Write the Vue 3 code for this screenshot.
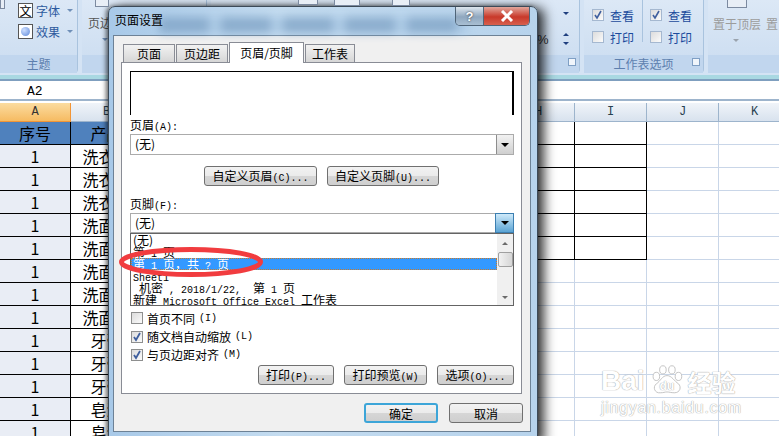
<template>
  <div class="screen">
    <!-- ribbon behind the dialog -->
    <div class="ribbon">
      <span v-for="(t, i) in topIcons" :key="i" class="top-ic" :style="{ left: t.x + 'px', width: t.w + 'px', height: t.h + 'px' }"></span>
      <div class="group g-theme">
        <div class="group-body">
          <div class="theme-item"><span class="ic-box">文</span><span>字体</span><i class="caret"></i></div>
          <div class="theme-item"><span class="ic-box"><b class="ball"></b></span><span>效果</span><i class="caret"></i></div>
        </div>
        <div class="group-label">主题</div>
      </div>
      <div class="group g-page">
        <div class="group-body"><span class="page-btn">页边</span><i class="caret page-caret"></i></div>
        <div class="group-label"></div>
      </div>
      <div class="group g-scale">
        <div class="group-body">
          <div class="scale-row"><i class="caret blue"></i></div>
          <div class="scale-row pct"><span class="pct-sign">%</span><span class="spin"><i class="up"></i><i class="caret blue"></i></span></div>
        </div>
        <div class="group-label"><i class="launcher"></i></div>
      </div>
      <div class="group g-sheet">
        <div class="group-body sheet-opts">
          <div class="opt-col" v-for="c in 2" :key="c">
            <div class="opt"><span class="cb rb"><svg viewBox="0 0 10 10"><path d="M2 5l2 3 4-7" fill="none" stroke="#3f5f9e" stroke-width="1.6"/></svg></span>查看</div>
            <div class="opt"><span class="cb rb"></span>打印</div>
          </div>
        </div>
        <div class="group-label">工作表选项<i class="launcher"></i></div>
      </div>
      <div class="group g-arrange">
        <div class="group-body"><span class="front">置于顶层</span><span class="front">置</span><i class="caret gray"></i></div>
        <div class="group-label"></div>
      </div>
    </div>

    <div class="formula"><span class="namebox">A2</span></div>

    <!-- sheet -->
    <div class="sheet">
      <div class="row head">
        <div v-for="(h, i) in colHeads" :key="i" class="hcell" :class="{ on: i === 0 }">{{ h }}</div>
      </div>
      <div class="row title">
        <div class="cell a blue">序号</div>
        <div class="cell b blue">产品</div>
        <div class="cell gap"></div>
        <div class="cell ruled"></div><div class="cell ruled"></div><div class="cell"></div><div class="cell"></div>
      </div>
      <div class="row" v-for="(r, i) in rows" :key="i">
        <div class="cell a">1</div>
        <div class="cell b">{{ r }}</div>
        <div class="cell gap"></div>
        <div class="cell" :class="{ ruled: i < 5 }"></div>
        <div class="cell" :class="{ ruled: i < 5 }"></div>
        <div class="cell"></div>
        <div class="cell"></div>
      </div>
    </div>

    <!-- watermark -->
    <div class="mark">
      <div class="mark-top">
        <span class="bai">Bai</span>
        <span class="paw-wrap">
          <svg class="paw" viewBox="0 0 44 36">
            <ellipse cx="9" cy="13" rx="4" ry="5"/><ellipse cx="17" cy="5" rx="4" ry="5"/>
            <ellipse cx="28" cy="5" rx="4" ry="5"/><ellipse cx="36" cy="13" rx="4" ry="5"/>
            <path d="M22 12c-6 0-8 7-13 10-5 4-2 12 5 11 4 0 5-1 8-1s5 1 9 1c7 0 9-7 5-11-5-3-8-10-14-10z"/>
          </svg>
          <span class="du">du</span>
        </span>
        <span class="cn">经验</span>
      </div>
      <div class="mark-url">jingyan.baidu.com</div>
    </div>

    <!-- page setup dialog -->
    <div class="dialog">
      <div class="blur-strip"></div>
      <div class="caption">页面设置</div>
      <div class="caption-btns">
        <span class="cap help">?</span>
        <span class="cap close">
          <svg viewBox="0 0 14 12" width="14" height="12"><path d="M2 1l10 10M12 1L2 11" stroke="#fff" stroke-width="3"/></svg>
        </span>
      </div>

      <div class="client">
        <div class="tabs">
          <div class="tab">页面</div>
          <div class="tab">页边距</div>
          <div class="tab active">页眉/页脚</div>
          <div class="tab">工作表</div>
        </div>

        <div class="panel">
          <div class="preview"></div>
          <div class="lbl">页眉<span class="lat">(A):</span></div>
          <div class="combo">
            <span class="combo-text">(无)</span>
            <span class="drop"><i class="caret dark"></i></span>
          </div>

          <div class="custom-row">
            <button class="btn w-custom-l">自定义页眉<span class="lat">(C)...</span></button>
            <button class="btn w-custom-r">自定义页脚<span class="lat">(U)...</span></button>
          </div>

          <div class="lbl second">页脚<span class="lat">(F):</span></div>
          <div class="combo foot">
            <span class="combo-text">(无)</span>
            <span class="drop hot"><i class="caret dark"></i></span>
          </div>

          <div class="list">
            <div class="items">
              <div class="item">(无)</div>
              <div class="item">第<span class="lat">&nbsp;1&nbsp;</span>页</div>
              <div class="item sel">第<span class="lat">&nbsp;1&nbsp;</span>页，共<span class="lat">&nbsp;?&nbsp;</span>页</div>
              <div class="item"><span class="lat">Sheet1</span></div>
              <div class="item"><span class="lat">&nbsp;</span>机密<span class="lat">&nbsp;,&nbsp;2018/1/22,&nbsp;&nbsp;</span>第<span class="lat">&nbsp;1&nbsp;</span>页</div>
              <div class="item">新建<span class="lat">&nbsp;Microsoft Office Excel&nbsp;</span>工作表</div>
            </div>
            <div class="scroll">
              <i class="up gray"></i>
              <b class="thumb"></b>
              <i class="caret gray low"></i>
            </div>
          </div>

          <div class="checks">
            <div class="check"><span class="cb"></span>首页不同<span class="lat">(I)</span></div>
            <div class="check"><span class="cb"><svg viewBox="0 0 10 10"><path d="M2 5l2 3 4-7" fill="none" stroke="#3f5f9e" stroke-width="1.8"/></svg></span>随文档自动缩放<span class="lat">(L)</span></div>
            <div class="check"><span class="cb"><svg viewBox="0 0 10 10"><path d="M2 5l2 3 4-7" fill="none" stroke="#3f5f9e" stroke-width="1.8"/></svg></span>与页边距对齐<span class="lat">(M)</span></div>
          </div>

          <div class="print-row">
            <button class="btn w-print">打印<span class="lat">(P)...</span></button>
            <button class="btn w-preview">打印预览<span class="lat">(W)</span></button>
            <button class="btn w-opts">选项<span class="lat">(O)...</span></button>
          </div>
        </div>

        <div class="footer">
          <button class="btn ok">确定</button>
          <button class="btn cancel">取消</button>
        </div>
      </div>

      <svg class="ring" width="150" height="34" viewBox="0 0 150 34">
        <ellipse cx="74" cy="17" rx="69.5" ry="12.5" fill="none" stroke="#f13c3f" stroke-width="5"/>
      </svg>
    </div>
  </div>
</template>

<script setup>
const colHeads = ['A', 'B', '', 'H', 'I', 'J', 'K']

const rows = [
  '洗衣机', '洗衣机', '洗衣机',
  '洗面奶', '洗面奶', '洗面奶', '洗面奶', '洗面奶',
  '牙膏', '牙膏', '牙膏',
  '皂液', '皂液'
]

// clipped icon bottoms along the top edge of the ribbon
const topIcons = [
  { x: 0, w: 5, h: 9 },
  { x: 95, w: 14, h: 7 },
  { x: 298, w: 20, h: 5 },
  { x: 334, w: 26, h: 6 },
  { x: 392, w: 18, h: 6 },
  { x: 727, w: 20, h: 8 }
]
</script>

<style>
html, body {
  margin: 0;
  overflow: hidden;
  background: #fff;
}
</style>

<style scoped>
.screen {
  position: relative;
  width: 779px;
  height: 436px;
  overflow: hidden;
  font-family: "Noto Sans CJK SC", "Liberation Sans", sans-serif;
  font-size: 12px;
  color: #000;
}

.lat {
  font-family: "Liberation Mono", "Noto Sans CJK SC", monospace;
  font-size: 10px;
  white-space: pre;
}

/* ribbon */
.ribbon {
  position: relative;
  display: flex;
  height: 81px;
  box-sizing: border-box;
  padding-bottom: 6px;
  background: #d4e3f4;
  border-bottom: 2px solid #7f9fbf;
  box-shadow: inset 0 -4px 0 #a9d8e2;
}
.top-ic {
  position: absolute;
  top: 0;
  box-sizing: border-box;
  background: #e8eef6;
  border: 1px solid #7c8aa0;
  border-top: 0;
  z-index: 1;
}
.group {
  display: flex;
  flex-direction: column;
  flex: none;
  box-sizing: border-box;
  height: 73px;
  border-right: 1px solid #a9c3de;
  border-radius: 0 0 4px 4px;
  margin-right: 4px;
  background: linear-gradient(#dce8f6, #cadcf0);
}
.group-body {
  height: 55px;
  position: relative;
}
.group-label {
  height: 18px;
  background: #c1d6ee;
  color: #5d7fae;
  text-align: center;
  line-height: 18px;
  font-size: 12px;
  position: relative;
}
.g-theme { width: 78px; }
.g-page { width: 125px; }
.g-scale { width: 369px; }
.g-sheet { width: 120px; }
.g-arrange { flex: 1; border-right: 0; margin-right: 0; }

.theme-item {
  display: flex;
  align-items: center;
  gap: 3px;
  height: 21px;
  padding-left: 18px;
  color: #2d5a9e;
}
.ic-box {
  width: 15px;
  height: 15px;
  box-sizing: border-box;
  background: #fff;
  border: 1px solid #555;
  color: #000;
  font-size: 12px;
  display: flex;
  align-items: center;
  justify-content: center;
}
.ball {
  width: 9px;
  height: 9px;
  border-radius: 50%;
  background: radial-gradient(circle at 35% 35%, #cfe0ff, #5c86d8);
}
.caret {
  display: inline-block;
  width: 0;
  height: 0;
  margin-left: 4px;
  border-left: 3px solid transparent;
  border-right: 3px solid transparent;
  border-top: 3px solid #6f8fb8;
}
.caret.blue { border-top-color: #1f3f7f; margin: 0; }
.caret.gray { border-top-color: #9aa3ad; }
.caret.dark { border-left-width: 4px; border-right-width: 4px; border-top: 4px solid #000; margin: 0; }
.up {
  display: block;
  width: 0;
  height: 0;
  border-left: 3px solid transparent;
  border-right: 3px solid transparent;
  border-bottom: 3px solid #1f3f7f;
}

.page-btn {
  position: absolute;
  left: 6px;
  top: 14px;
  color: #555;
}
.page-caret {
  position: absolute;
  left: 20px;
  top: 38px;
  margin: 0;
}

.scale-row {
  display: flex;
  justify-content: flex-end;
  align-items: center;
  height: 26px;
  padding-right: 10px;
}
.pct-sign {
  margin-right: auto;
  margin-left: 326px;
  font-family: "Liberation Sans", sans-serif;
  font-size: 13px;
  color: #333;
}
.spin {
  display: flex;
  flex-direction: column;
  align-items: center;
  gap: 6px;
}
.launcher {
  position: absolute;
  right: 3px;
  top: 3px;
  width: 6px;
  height: 6px;
  background: #f0f5fb;
  border: 1px solid #7f9fc4;
}

.sheet-opts {
  display: flex;
  padding-left: 8px;
  gap: 8px;
}
.opt-col + .opt-col {
  border-left: 1px solid #a9c3de;
  padding-left: 7px;
  height: 42px;
}
.opt {
  display: flex;
  align-items: center;
  gap: 6px;
  height: 22px;
  color: #1b4a9c;
}
.opt:first-child { margin-top: 4px; }

.cb {
  display: inline-flex;
  flex: none;
  box-sizing: border-box;
  width: 12px;
  height: 12px;
  background: linear-gradient(135deg, #dcdcdc, #fbfbfb);
  border: 1px solid #8e8f8f;
}
.cb svg { width: 10px; height: 10px; }
.cb.rb { border-color: #a5b8d0; }

.front {
  color: #9c9c9c;
  position: relative;
  top: 15px;
  margin-left: 5px;
  display: inline-block;
}
.g-arrange .caret {
  position: absolute;
  left: 25px;
  top: 39px;
  margin: 0;
}

/* formula bar */
.formula {
  height: 18px;
  background: #fff;
  border-bottom: 2px solid #9db4cc;
  line-height: 18px;
}
.namebox {
  margin-left: 27px;
  font-family: "Liberation Mono", monospace;
  font-size: 13px;
}

/* grid */
.sheet {
  margin-top: 2px;
}
.row {
  display: grid;
  grid-template-columns: 71px 72px 360px 72px 72px 72px 72px;
  grid-template-rows: 100%;
  height: 23px;
}
.row.head {
  height: 19px;
}
.hcell {
  box-sizing: border-box;
  background: linear-gradient(#f0f4f9, #d8e2ee);
  border-right: 1px solid #9db4cc;
  border-bottom: 1px solid #9db4cc;
  text-align: center;
  line-height: 18px;
  font-family: "Liberation Mono", monospace;
  font-size: 12px;
  color: #27414f;
}
.hcell.on {
  background: linear-gradient(#fbdca0, #f6bb62);
  border-right-color: #f29536;
  border-bottom-color: #f29536;
  color: #333;
}
.cell {
  box-sizing: border-box;
  border-right: 1px solid #c9d6e8;
  border-bottom: 1px solid #c9d6e8;
  background: #fff;
}
.cell.a, .cell.b {
  text-align: center;
  font-size: 16px;
  line-height: 22px;
  border-right: 1px solid #000;
  border-bottom: 1px solid #000;
}
.cell.a { background: #e9edf5; }
.cell.blue { background: #4f81bd; }
.cell.ruled {
  border-right: 1px solid #000;
  border-bottom: 1px solid #000;
}

/* watermark */
.mark {
  position: absolute;
  left: 601px;
  top: 365px;
  width: 140px;
  color: #fff;
  text-shadow: 0 0 1px #a8a8a8, 0 0 1px #a8a8a8;
  font-family: "Liberation Sans", sans-serif;
}
.mark-top {
  display: flex;
  align-items: flex-end;
  height: 31px;
}
.bai {
  font-size: 28px;
  font-weight: 700;
  line-height: 30px;
}
.paw-wrap {
  position: relative;
  display: block;
  flex: none;
  width: 36px;
  height: 31px;
  margin-left: 4px;
}
.paw {
  display: block;
  width: 36px;
  height: 31px;
  fill: #fff;
  stroke: #b8b8b8;
}
.du {
  position: absolute;
  left: 11px;
  top: 15px;
  font-size: 12px;
  line-height: 12px;
  font-weight: 700;
  color: #fff;
}
.cn {
  font-family: "Noto Sans CJK SC", sans-serif;
  font-size: 24px;
  line-height: 29px;
  font-weight: 700;
  margin-left: 3px;
  white-space: nowrap;
}
.mark-url {
  font-size: 16px;
  line-height: 18px;
  margin-top: 3px;
  letter-spacing: 0.7px;
  white-space: nowrap;
}

/* dialog */
.dialog {
  position: absolute;
  left: 108px;
  top: 6px;
  width: 430px;
  height: 436px;
  box-sizing: border-box;
  padding: 28px 6px 5px 5px;
  background: linear-gradient(90deg, #a8c9e8, #c4dcf0 40%, #b7d3ec);
  border: 1px solid #3c4a58;
  border-radius: 7px 7px 0 0;
  box-shadow: 6px 2px 12px rgba(0, 0, 0, 0.8), -2px 0 4px rgba(0, 0, 0, 0.5);
}
.blur-strip {
  position: absolute;
  left: 50px;
  top: 10px;
  width: 310px;
  height: 16px;
  background: repeating-linear-gradient(90deg, #7fa3c6 0 50px, #a9c8e4 50px 62px);
  filter: blur(5px);
  opacity: 0.8;
}
.caption {
  position: absolute;
  left: 6px;
  top: 4px;
  line-height: 18px;
}
.caption-btns {
  position: absolute;
  right: 7px;
  top: 0;
  display: flex;
  border: 1px solid #4f6478;
  border-top: 0;
  border-radius: 0 0 5px 5px;
  overflow: hidden;
}
.cap {
  display: flex;
  align-items: center;
  justify-content: center;
  height: 18px;
}
.help {
  width: 27px;
  background: linear-gradient(#dde6ee, #8fa7bf 55%, #a9bfd3);
  color: #fff;
  font-family: "Liberation Sans", sans-serif;
  font-weight: 700;
  font-size: 13px;
  text-shadow: 0 0 2px #222;
  border-right: 1px solid #53687c;
}
.close {
  width: 45px;
  background: linear-gradient(#e2a79c, #c8392a 55%, #d8604e);
}
.client {
  box-sizing: border-box;
  height: 397px;
  padding: 0 8px 0 7px;
  background: #f0f0f0;
  border: 1px solid #6d8296;
  border-left-width: 0;
  box-shadow: -1px 0 0 #6d8296;
}
.tabs {
  display: flex;
  align-items: flex-end;
  height: 26px;
  padding-left: 2px;
}
.tab {
  box-sizing: border-box;
  flex: none;
  height: 18px;
  margin-right: 1px;
  background: linear-gradient(#f2f2f2, #d6d6d6);
  border: 1px solid #898c95;
  border-bottom: 0;
  line-height: 17px;
  text-align: center;
  white-space: nowrap;
  width: 52px;
}
.tab.active {
  height: 21px;
  width: 75px;
  margin-bottom: -1px;
  background: #fff;
  position: relative;
  line-height: 19px;
}
.tab:nth-child(4) { width: 50px; }

.panel {
  box-sizing: border-box;
  width: 401px;
  height: 332px;
  padding: 8px 7px 0 8px;
  background: #fff;
  border: 1px solid #898c95;
}
.preview {
  box-sizing: border-box;
  height: 44px;
  border-top: 1px solid #000;
  border-left: 1px solid #000;
  border-right: 2px solid #000;
}
.lbl {
  height: 14px;
  margin-top: 3px;
  line-height: 13px;
}
.lbl.second {
  margin-top: 11px;
}
.combo {
  display: flex;
  justify-content: space-between;
  box-sizing: border-box;
  height: 21px;
  margin-top: 2px;
  border: 1px solid #ababab;
  background: #fff;
}
.combo.foot {
  height: 20px;
}
.combo-text {
  padding-left: 4px;
  line-height: 18px;
}
.drop {
  display: flex;
  align-items: center;
  justify-content: center;
  width: 16px;
  background: linear-gradient(#f2f2f2, #cfcfcf);
  border-left: 1px solid #8d8d8d;
}
.drop.hot {
  background: linear-gradient(#cfeafa, #5ba4d4);
  border: 1px solid #3c7fb1;
  margin: -1px;
  width: 17px;
}

.custom-row {
  display: flex;
  gap: 10px;
  margin-top: 11px;
  padding-left: 74px;
}
.btn {
  box-sizing: border-box;
  height: 20px;
  padding: 0;
  font-family: inherit;
  font-size: 12px;
  line-height: 17px;
  color: #000;
  background: linear-gradient(#f2f2f2 0, #ebebeb 48%, #d6d6d6 52%, #cfcfcf 100%);
  border: 1px solid #707070;
  border-radius: 3px;
}
.w-custom-l { width: 113px; }
.w-custom-r { width: 112px; }

.list {
  display: flex;
  box-sizing: border-box;
  height: 73px;
  border: 1px solid #646464;
  background: #fff;
}
.items {
  flex: 1;
  min-width: 0;
  overflow: hidden;
}
.item {
  height: 12px;
  line-height: 11px;
  padding-left: 2px;
  white-space: nowrap;
}
.item.sel {
  background: #3399ff;
  color: #fff;
  outline: 1px dotted #c87a2a;
  outline-offset: -1px;
}
.scroll {
  position: relative;
  flex: none;
  display: flex;
  flex-direction: column;
  align-items: center;
  width: 16px;
  background: #f0f0f0;
  padding-top: 8px;
  box-sizing: border-box;
}
.up.gray { border-bottom-color: #6b6b6b; }
.thumb {
  display: block;
  box-sizing: border-box;
  flex: none;
  width: 15px;
  height: 15px;
  margin-top: 7px;
  background: linear-gradient(90deg, #f2f2f2, #d6d6d6);
  border: 1px solid #a0a0a0;
  border-radius: 2px;
}
.caret.low {
  margin: 29px 0 0;
  border-top-color: #6b6b6b;
}

.checks {
  margin-top: 3px;
}
.check {
  display: flex;
  align-items: center;
  gap: 4px;
  height: 18.4px;
  padding-left: 1px;
}
.print-row {
  display: flex;
  justify-content: flex-end;
  gap: 10px;
  margin-top: 1px;
}
.w-print { width: 76px; }
.w-preview { width: 83px; }
.w-opts { width: 77px; }

.footer {
  display: flex;
  justify-content: flex-end;
  gap: 11px;
  width: 402px;
  margin-top: 9px;
}
.ok, .cancel {
  width: 74px;
}
.ok {
  border: 2px solid #3ca5d8;
}

.ring {
  position: absolute;
  left: 8px;
  top: 238px;
  pointer-events: none;
}
</style>
